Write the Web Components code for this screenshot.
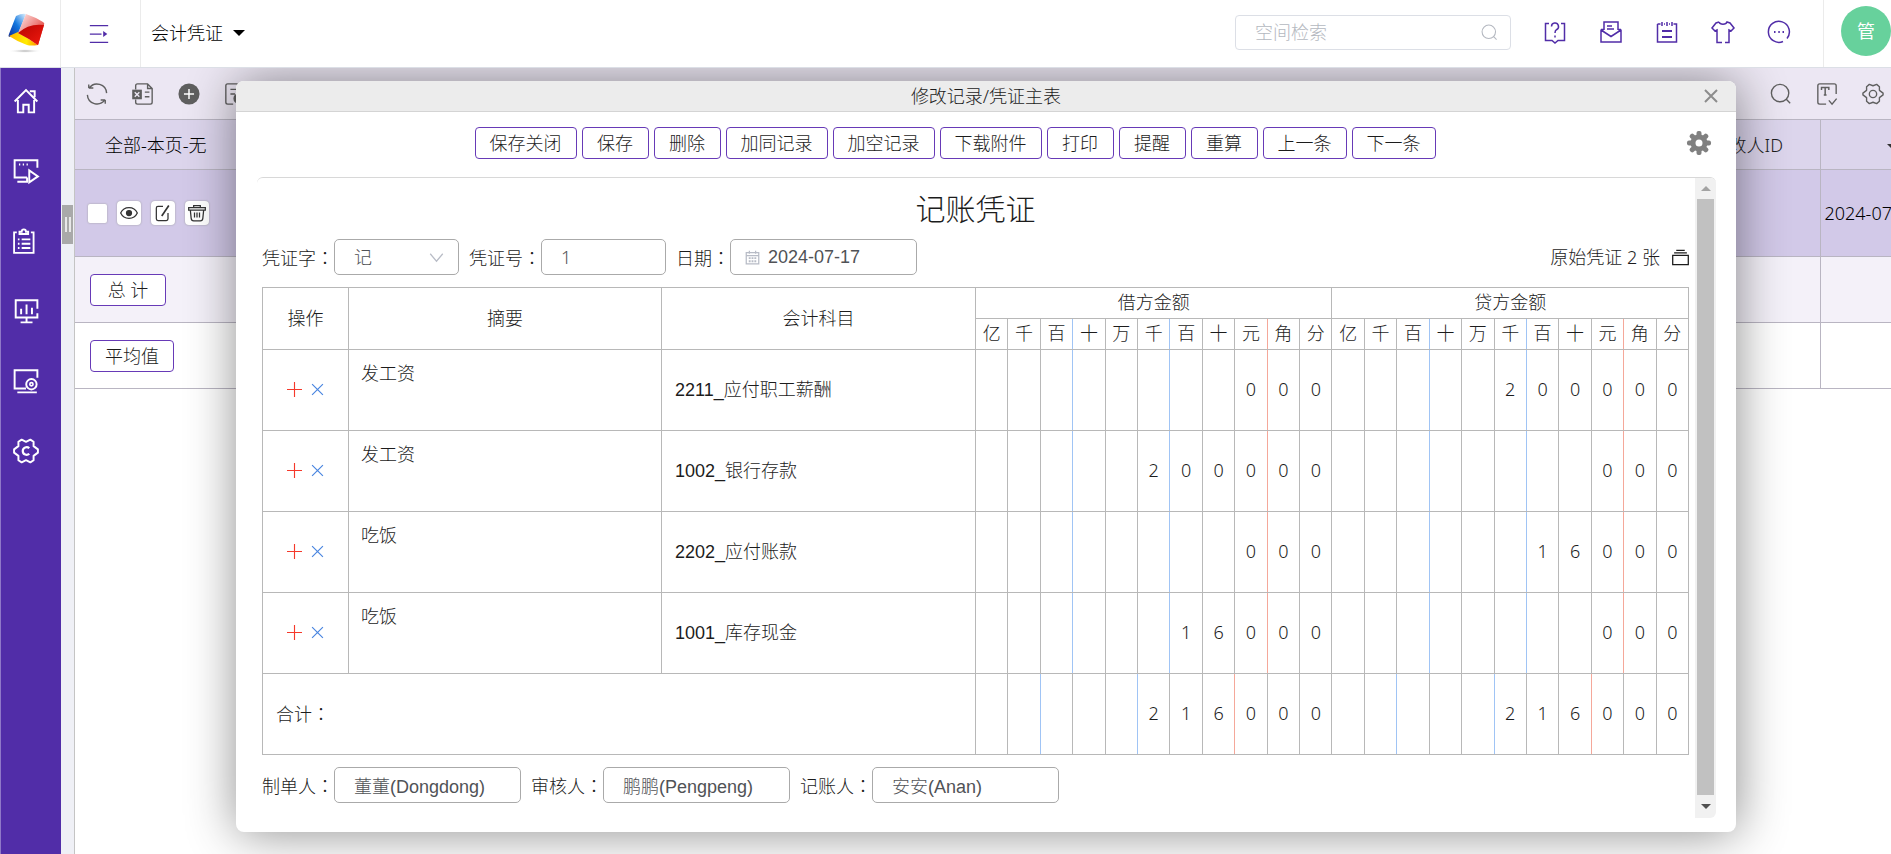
<!DOCTYPE html>
<html lang="zh-CN">
<head>
<meta charset="utf-8">
<meta name="viewport" content="width=device-width, initial-scale=1">
<title>会计凭证</title>
<style>
  body {
    margin: 0;
    font: 300 18px/24px "Noto Sans", "Noto Sans CJK SC", sans-serif;
    color: #1c1c1c;
    --brand: #512da8;
    --line: #b8b8b8;
  }
</style>
</head>
<body>
<voucher-app></voucher-app>

<script>
// ============ ICONS ============

// 24x24 grid, stroked with currentColor
const ICONS = {
  menu: '<path d="M1 2h22M1 12h14M1 22h22"/><path d="M17 8.5v7l5-3.5z" fill="currentColor" stroke="none"/>',
  search: '<circle cx="11" cy="11" r="9.500"/><path d="M17.5 17.5L22 22"/>',
  help: '<path d="M6 3.500H2.500v17H9l3 2.500 3-2.500h6.500v-17H18"/><path d="M8.500 6.500a3.500 3.500 0 1 1 5 3.200c-1.200.7-1.500 1.300-1.500 3.300M12 15.500v2"/>',
  mail: '<path d="M5 10V2h14v8M2 9.500h3M19 9.500h3M2 9.500V22h20V9.500M2 10l10 6.500L22 10M8 6h5M8 9h7"/>',
  notes: '<path d="M2.500 4v18h19V4h-3M5.500 4h-3M7 2v4M12 2v4M17 2v4M9 4h1M14 4h1"/><path d="M7 11h10M7 17h10" stroke-width="2"/>',
  shirt: '<path d="M8 2c1 3 7 3 8 0l3 1 4 5-3 3-2-1v12.500h-4M11 22.500H6V10l-2 1-3-3 4-5 3-1"/>',
  more: '<path d="M20 18.500a10.500 10.500 0 1 0-4 3"/><path d="M7 12h1.500M11.300 12h1.500M15.500 12H17" stroke-width="2"/>',
  home: '<path d="M1.500 12.500L12 2l10.500 10.500M4.500 11v11.500h5v-7h5v7h5V11M15.500 3h4.500v5.500" stroke-width="1.800"/>',
  screen: '<path d="M22.500 9V2h-21v16H13M4 22h9v-4M5.500 6h1.200M9 6h1.200M12.500 6h1.200" stroke-width="1.800"/><path d="M15 11.500v11l8-5.500z" stroke-width="1.800"/>',
  clip: '<path d="M3.500 4H1v19h18V4h-2.500M6 5.500h8V3.500h-2c0-3-4-3-4 0H6zM8 10.500h8M8 14.500h8M8 18.500h8M4.500 10.500H6M4.500 14.500H6M4.500 18.500H6" stroke-width="1.700"/>',
  chart: '<path d="M22.500 10V2h-20v16h20v-4M12.500 18v4.500M7 22.500h11M7.500 10v5M12.500 6v9M17.500 9v6" stroke-width="1.800"/>',
  monitor: '<path d="M22.500 9V2h-21v17H12M4 22.500h18" stroke-width="1.800"/><circle cx="17" cy="15" r="4.800" stroke-width="1.800"/><circle cx="17" cy="15" r="1.500"/>',
  cog: '<path d="M8 1.500l4 2 4-2 3 2v4l4 3v3l-4 3v4l-3 2-4-2-4 2-3-2v-4l-4-3v-3l4-3v-4z" stroke-width="1.800" stroke-linejoin="round"/><path d="M15 9.500c-2-2-6-1-6 2.500s4 4.500 6 2.500" stroke-width="2"/>',
  refresh: '<path d="M3 5.500v-4M3 5.500h5M3.500 5.500a10.500 10.500 0 0 1 19 5.500M21 18.500v4M21 18.500h-5M20.500 18.500a10.500 10.500 0 0 1-19-5.500"/>',
  excel: '<path d="M4 7V3q0-2 2-2h11l5 5v15q0 2-2 2H6q-2 0-2-2v-3M17 1v5h5M14 10h5M14 15h5"/><rect x="1" y="8" width="9" height="9" fill="currentColor"/><path d="M3 10l5 5M8 10l-5 5" stroke="#ece7f3"/>',
  plus: '<circle cx="12" cy="12" r="11.500" fill="currentColor" stroke="none"/><path d="M12 6.500v11M6.500 12h11" stroke="#fff" stroke-width="1.600"/>',
  docadd: '<path d="M21 9V3q0-2-2-2H4Q2 1 2 3v18q0 2 2 2h6M7 7h10M7 12h5"/><circle cx="16" cy="17" r="5" fill="currentColor"/>',
  textcheck: '<path d="M22 12V3q0-2-2-2H4Q2 1 2 3v18q0 2 2 2h7M14 19l3.500 4 5-6"/><path d="M6 7.500V5h8v2.500M10 5v8M8.500 13h3" stroke-width="1.600"/>',
  gear: '<path d="M8 1.500l4 1.500 4-1.500 3 2.500v4l4 3v2l-4 3v4l-3 2.500-4-1.500-4 1.500-3-2.500v-4l-4-3v-2l4-3V4z" stroke-linejoin="round"/><circle cx="12" cy="12" r="4"/>',
  eye: '<path d="M2 12c4-8.500 16-8.500 20 0-4 8.500-16 8.500-20 0z"/><circle cx="12" cy="12" r="3" fill="currentColor"/>',
  edit: '<path d="M12 4H6Q4 4 4 6v13q0 2 2 2h10q2 0 2-2v-7"/><path d="M10.500 15.500L19 3" stroke-width="2"/>',
  trash: '<path d="M2 5.500h20v3H2zM8 5.500V3h8v2.500M4 8.500l1 10q.3 3 3 3h8q2.700 0 3-3l1-10M9 11.500v6M12 11.500v6M15 11.500v6"/>',
  close: '<path d="M3 3l18 18M21 3L3 21" stroke-width="3"/>',
  cross: '<path d="M2 2l20 20M22 2L2 22" stroke-width="2.200"/>',
  add: '<path d="M12 0v24M0 12h24" stroke-width="1.800"/>',
  chevron: '<path d="M2 6l10 12L22 6" stroke-width="2"/>',
  calendar: '<path d="M2 4h20v18H2zM2 9h20M7 1v5M17 1v5" stroke-width="2"/><path d="M6 13h12M6 18h12" stroke-width="3" stroke-dasharray="3 1.500"/>',
  stack: '<path d="M1 9h22v13H1z" stroke-width="1.800"/><path d="M3 5.500h18M6 2h12" stroke-width="1.600"/>',
};

// Solid gear with eight teeth
ICONS.gearSolid = '<path fill-rule="evenodd" fill="currentColor" stroke="none" d="M12 3.500a8.500 8.500 0 1 0 0 17 8.500 8.500 0 0 0 0-17zm0 5a3.500 3.500 0 1 1 0 7 3.500 3.500 0 0 1 0-7z"/>' +
  [0, 45, 90, 135, 180, 225, 270, 315]
    .map(a => `<rect x="9.500" y="0" width="5" height="6" rx="2" fill="currentColor" stroke="none" transform="rotate(${a} 12 12)"/>`)
    .join('');

class UiIcon extends HTMLElement {
  constructor() {
    super();
    this.attachShadow({ mode: 'open' });
  }

  connectedCallback() {
    this.shadowRoot.innerHTML = `
      <style>
        :host { display: inline-flex; flex: none; width: 22px; height: 22px; }
        svg { width: 100%; height: 100%; overflow: visible; }
      </style>
      <svg viewBox="0 0 24 24" fill="none" stroke="currentColor" stroke-width="1.500" aria-hidden="true">${ICONS[this.getAttribute('name')]}</svg>
    `;
  }
}
customElements.define('ui-icon', UiIcon);

// ============ BUTTON ============

class UiButton extends HTMLElement {
  constructor() {
    super();
    this.attachShadow({ mode: 'open' }).innerHTML = `
      <style>
        :host { display: inline-flex; }
        button {
          box-sizing: border-box;
          height: 32px;
          padding: 0 14px;
          min-width: var(--button-min, 67px);
          background: #fff;
          border: 1px solid #673ab7;
          border-radius: 4px;
          font: inherit;
          color: #1c1c1c;
          white-space: nowrap;
          cursor: pointer;
        }
        button:hover { background: #f4f1f9; }
      </style>
      <button type="button"><slot></slot></button>
    `;
  }
}
customElements.define('ui-button', UiButton);

// ============ FORM FIELD ============

/**
 * @attr {string} label
 * @attr {string} type - text | select | date
 * @attr {string} value
 */
class UiField extends HTMLElement {
  constructor() {
    super();
    this.attachShadow({ mode: 'open' });
  }

  connectedCallback() {
    const type = this.getAttribute('type') || 'text';
    const value = this.getAttribute('value') || '';
    const control = type === 'select'
      ? `<select id="control"><option>${value}</option><option>收</option><option>付</option><option>转</option></select>`
      : `<input id="control" type="text" value="${value}">`;

    this.shadowRoot.innerHTML = `
      <style>
        :host { display: flex; align-items: center; }
        label { white-space: nowrap; }
        .colon { font-family: "Noto Sans CJK TC", sans-serif; }
        .box {
          box-sizing: border-box;
          display: flex;
          align-items: center;
          width: var(--field-width, 125px);
          height: 36px;
          border: 1px solid #aaa;
          border-radius: 5px;
          background: #fff;
        }
        .box.date { padding-left: 14px; }
        .box.select { padding-right: 14px; }
        input, select {
          flex: 1;
          min-width: 0;
          height: 32px;
          padding: 0 0 0 19px;
          border: 0;
          outline: 0;
          background: none;
          appearance: none;
          font-size: 18px;
          font-weight: inherit;
          font-family: var(--field-font, "Noto Sans", "Noto Sans CJK SC", sans-serif);
          color: #505256;
        }
        .date input { padding-left: 8px; }
        ui-icon { width: 15px; height: 15px; color: #b8bcc6; }
      </style>
      <label for="control">${this.getAttribute('label')}<span class="colon" lang="zh-TW">：</span></label>
      <div class="box ${type}">
        ${type === 'date' ? '<ui-icon name="calendar"></ui-icon>' : ''}
        ${control}
        ${type === 'select' ? '<ui-icon name="chevron"></ui-icon>' : ''}
      </div>
    `;
  }
}
customElements.define('ui-field', UiField);

// ============ TOP BAR ============

class AppHeader extends HTMLElement {
  constructor() {
    super();
    this.attachShadow({ mode: 'open' }).innerHTML = `
      <style>
        :host {
          box-sizing: border-box;
          display: flex;
          align-items: stretch;
          height: 68px;
          background: #fff;
          border-bottom: 1px solid #dcdfe6;
          color: var(--brand);
        }
        button {
          display: flex;
          align-items: center;
          justify-content: center;
          padding: 0;
          border: 0;
          background: none;
          font: inherit;
          color: inherit;
          cursor: pointer;
        }
        .logo { width: 60px; border-right: 1px solid #ebebeb; }
        .toggle {
          width: 80px;
          padding-right: 4px;
          border-right: 1px solid #ebebeb;
        }
        .toggle ui-icon { width: 20px; height: 20px; }
        .title {
          gap: 10px;
          padding: 0 10px 2px;
          color: #000;
        }
        .caret {
          border: 6px solid transparent;
          border-top-color: #000;
          border-bottom: 0;
        }
        .right {
          display: flex;
          align-items: center;
          gap: 32px;
          margin-left: auto;
        }
        .right > button, .search { margin-bottom: 3px; }
        .search {
          box-sizing: border-box;
          display: flex;
          align-items: center;
          width: 276px;
          height: 35px;
          padding: 0 12px 0 19px;
          border: 1px solid #dcdfe6;
          border-radius: 4px;
          color: #b4b8c0;
        }
        .search input {
          flex: 1;
          min-width: 0;
          padding: 0;
          border: 0;
          outline: 0;
          background: none;
          font: inherit;
          color: #606266;
        }
        .search input::placeholder { color: #b4b8c0; }
        .search ui-icon { width: 17px; height: 17px; }
        .right button ui-icon { width: 24px; height: 24px; }
        .user {
          display: flex;
          align-items: center;
          align-self: stretch;
          box-sizing: border-box;
          padding: 0 0 5px 17px;
          border-left: 1px solid #ebebeb;
        }
        .avatar {
          width: 50px;
          height: 50px;
          border-radius: 50%;
          background: #67d19c;
          color: #fff;
          font-weight: 400;
        }
      </style>
      <div class="logo">
        <svg width="60" height="67" viewBox="0 0 60 67" role="img" aria-label="logo">
          <defs>
            <linearGradient id="blue" x1="0" y1="1" x2="1" y2="0"><stop offset="0" stop-color="#0b2c9c"/><stop offset=".5" stop-color="#1277df"/><stop offset="1" stop-color="#e3f4ff"/></linearGradient>
            <linearGradient id="red" x1="0" y1="0" x2="1" y2="1"><stop offset="0" stop-color="#fff0f0"/><stop offset=".6" stop-color="#ea6a64"/><stop offset="1" stop-color="#c30000"/></linearGradient>
            <linearGradient id="deep" x1="0" y1="0" x2="1" y2="1"><stop offset="0" stop-color="#b80400"/><stop offset="1" stop-color="#f01a10"/></linearGradient>
            <linearGradient id="yellow"><stop offset="0" stop-color="#ffb400"/><stop offset=".6" stop-color="#ffec00"/><stop offset="1" stop-color="#ff8a00"/></linearGradient>
            <radialGradient id="shade"><stop offset="0" stop-color="#aaa"/><stop offset="1" stop-color="#fff" stop-opacity="0"/></radialGradient>
          </defs>
          <ellipse cx="25" cy="51" rx="17" ry="2" fill="url(#shade)"/>
          <path d="M16 16q6-3 10-2L18 34 9 37q-1-1 0-3z" fill="url(#blue)"/>
          <path d="M9 36l9-4 20 13q-7 1-11 0-9-3-18-9z" fill="url(#yellow)"/>
          <path d="M26 14q9 3 17 8 2 1 1 3l-6 20q-10-7-20-12z" fill="url(#red)"/>
          <path d="M18 33q11-10 26-8l-6 20q-10-7-20-12z" fill="url(#deep)"/>
        </svg>
      </div>
      <button class="toggle" aria-label="菜单"><ui-icon name="menu"></ui-icon></button>
      <button class="title">会计凭证<span class="caret"></span></button>
      <div class="right">
        <div class="search">
          <input type="text" placeholder="空间检索" aria-label="空间检索">
          <ui-icon name="search"></ui-icon>
        </div>
        <button aria-label="帮助"><ui-icon name="help"></ui-icon></button>
        <button aria-label="邮件"><ui-icon name="mail"></ui-icon></button>
        <button aria-label="便签"><ui-icon name="notes"></ui-icon></button>
        <button aria-label="换肤"><ui-icon name="shirt"></ui-icon></button>
        <button aria-label="更多"><ui-icon name="more"></ui-icon></button>
        <div class="user"><button class="avatar">管</button></div>
      </div>
    `;
  }
}
customElements.define('app-header', AppHeader);

// ============ SIDE BAR ============

class AppSidebar extends HTMLElement {
  constructor() {
    super();
    this.attachShadow({ mode: 'open' }).innerHTML = `
      <style>
        :host { display: flex; }
        nav {
          box-sizing: border-box;
          display: flex;
          flex-direction: column;
          gap: 44px;
          width: 61px;
          padding: 20px 12px;
          background: var(--brand);
          border-left: 1px solid #8f78c8;
        }
        a { display: flex; color: #fff; }
        a ui-icon { width: 26px; height: 26px; }
        .gutter {
          width: 13px;
          padding: 137px 1px 0;
          box-sizing: border-box;
          background: #eff0f6;
        }
        .handle {
          display: flex;
          align-items: center;
          justify-content: center;
          gap: 2px;
          height: 39px;
          background: #a9a9a9;
        }
        .handle i { width: 2px; height: 15px; background: #e8e8e8; }
      </style>
      <nav>
        ${['home', 'screen', 'clip', 'chart', 'monitor', 'cog'].map(n => `<a href="#${n}" aria-label="${n}"><ui-icon name="${n}"></ui-icon></a>`).join('')}
      </nav>
      <div class="gutter"><div class="handle"><i></i><i></i></div></div>
    `;
  }
}
customElements.define('app-sidebar', AppSidebar);

// ============ RECORD LIST ============

class RecordList extends HTMLElement {
  constructor() {
    super();
    this.attachShadow({ mode: 'open' }).innerHTML = `
      <style>
        :host {
          display: block;
          border-left: 1px solid #c4c4c4;
          overflow: hidden;
        }
        .tools {
          display: flex;
          align-items: center;
          gap: 24px;
          height: 51px;
          padding: 0 7px 0 11px;
          background: #ece7f3;
          color: #5f5f5f;
        }
        .tools button, .ops button {
          display: flex;
          padding: 0;
          border: 0;
          background: none;
          color: inherit;
          cursor: pointer;
        }
        .tools .find { margin-left: auto; }
        table {
          width: calc(100% + 75px);
          table-layout: fixed;
          border-collapse: collapse;
        }
        th, td {
          box-sizing: border-box;
          padding: 0;
          border-top: 1px solid #b9b5c2;
          border-bottom: 1px solid #b9b5c2;
          font-weight: inherit;
          text-align: left;
          white-space: nowrap;
        }
        th:last-child, td:last-child { border-left: 1px solid #b9b5c2; padding-left: 4px; }
        tr { height: 66px; background: #fff; }
        tr.head { height: 50px; background: #dcd5ec; }
        tr.record { height: 87px; background: #d2c9e8; color: #000; }
        tr.sum { background: #f4f1f9; }
        .head th:first-child { padding-left: 30px; color: #000; }
        .head th:nth-child(3), .head th:last-child { text-align: center; padding: 0; }
        .caret {
          display: inline-block;
          border: 6px solid transparent;
          border-top-color: #333;
          border-bottom: 0;
          vertical-align: middle;
        }
        .ops {
          display: flex;
          align-items: center;
          gap: 10px;
          padding-left: 13px;
        }
        .ops input {
          appearance: none;
          width: 19px;
          height: 19px;
          margin: 0;
          background: #fff;
          border-radius: 2px;
          box-shadow: 0 0 2px #999;
        }
        .ops button {
          width: 24px;
          height: 24px;
          align-items: center;
          justify-content: center;
          background: #fff;
          border-radius: 4px;
          box-shadow: 0 0 2px #999;
          color: #333;
        }
        .ops ui-icon { width: 20px; height: 20px; }
        .stat { padding-left: 15px; }
        .stat ui-button { --button-min: 76px; vertical-align: middle; }
      </style>
      <div class="tools">
        <button aria-label="刷新"><ui-icon name="refresh"></ui-icon></button>
        <button aria-label="导出"><ui-icon name="excel"></ui-icon></button>
        <button aria-label="新增"><ui-icon name="plus"></ui-icon></button>
        <button aria-label="批量新增"><ui-icon name="docadd"></ui-icon></button>
        <button class="find" aria-label="查找"><ui-icon name="search"></ui-icon></button>
        <button aria-label="字段"><ui-icon name="textcheck"></ui-icon></button>
        <button aria-label="设置"><ui-icon name="gear"></ui-icon></button>
      </div>
      <table>
        <colgroup><col style="width:250px"><col><col style="width:146px"><col style="width:146px"></colgroup>
        <tr class="head"><th>全部-本页-无</th><th></th><th>修改人ID</th><th><span class="caret"></span></th></tr>
        <tr class="record">
          <td><div class="ops">
            <input type="checkbox" aria-label="选择">
            <button aria-label="查看"><ui-icon name="eye"></ui-icon></button>
            <button aria-label="编辑"><ui-icon name="edit"></ui-icon></button>
            <button aria-label="删除"><ui-icon name="trash"></ui-icon></button>
          </div></td>
          <td></td><td></td><td>2024-07</td>
        </tr>
        <tr class="sum"><td class="stat"><ui-button>总 计</ui-button></td><td></td><td></td><td></td></tr>
        <tr><td class="stat"><ui-button>平均值</ui-button></td><td></td><td></td><td></td></tr>
      </table>
    `;
  }
}
customElements.define('record-list', RecordList);

// ============ VOUCHER TABLE ============

const UNITS = ['亿', '千', '百', '十', '万', '千', '百', '十', '元', '角', '分'];

const ENTRIES = [
  { memo: '发工资', subject: '2211_应付职工薪酬', debit: '000', credit: '200000' },
  { memo: '发工资', subject: '1002_银行存款', debit: '200000', credit: '000' },
  { memo: '吃饭', subject: '2202_应付账款', debit: '000', credit: '16000' },
  { memo: '吃饭', subject: '1001_库存现金', debit: '16000', credit: '000' },
];

const TOTAL = { debit: '216000', credit: '216000' };

class VoucherTable extends HTMLElement {
  constructor() {
    super();
    this.attachShadow({ mode: 'open' });
  }

  connectedCallback() {
    this.shadowRoot.innerHTML = `
      <style>
        :host { display: block; }
        table {
          width: 100%;
          table-layout: fixed;
          border-collapse: collapse;
        }
        th, td {
          padding: 0 0 2px;
          border: 1px solid var(--line);
          font-weight: inherit;
          text-align: center;
        }
        thead tr { height: 31px; }
        tbody tr, tfoot tr { height: 81px; }
        .blue { border-right-color: #a0c4f5; }
        .red { border-right-color: #f5a89a; }
        .memo {
          padding: 11px 12px 0;
          text-align: left;
          vertical-align: top;
        }
        .subject {
          padding: 0 0 0 13px;
          text-align: left;
          font-family: "Liberation Sans", "Noto Sans CJK SC", sans-serif;
        }
        .total { padding-left: 13px; text-align: left; }
        .colon { font-family: "Noto Sans CJK TC", sans-serif; }
        .ops { display: flex; align-items: center; justify-content: center; gap: 9px; }
        .ops button {
          display: flex;
          padding: 0;
          border: 0;
          background: none;
          color: #f5392b;
          cursor: pointer;
        }
        .ops button + button { color: #4a86e0; }
        .ops ui-icon { width: 15px; height: 15px; }
        .ops button + button ui-icon { width: 13px; height: 13px; }
      </style>
      <table>
        <colgroup><col style="width:86px"><col style="width:313px"><col style="width:314px"><col span="22"></colgroup>
        <thead>
          <tr>
            <th rowspan="2">操作</th><th rowspan="2">摘要</th><th rowspan="2">会计科目</th>
            <th colspan="11">借方金额</th><th colspan="11">贷方金额</th>
          </tr>
          <tr>${this._cells(UNITS, 'th', 0)}${this._cells(UNITS, 'th', 0)}</tr>
        </thead>
        <tbody>${ENTRIES.map(e => this._row(e)).join('')}</tbody>
        <tfoot>
          <tr><td class="total" colspan="3">合计<span class="colon" lang="zh-TW">：</span></td>${this._amount(TOTAL.debit, 1)}${this._amount(TOTAL.credit, 1)}</tr>
        </tfoot>
      </table>
    `;
  }

  // shift moves the coloured separators one column left (total row)
  _cells(values, tag, shift) {
    return values.map((v, i) => {
      const n = i + 1 + shift;
      const cls = n === 3 || n === 6 ? 'blue' : n === 9 ? 'red' : '';
      return `<${tag} class="${cls}">${v}</${tag}>`;
    }).join('');
  }

  _amount(text, shift = 0) {
    return this._cells([...text.padStart(UNITS.length)].map(c => c.trim()), 'td', shift);
  }

  _row({ memo, subject, debit, credit }) {
    return `
      <tr>
        <td><div class="ops">
          <button aria-label="插入"><ui-icon name="add"></ui-icon></button>
          <button aria-label="移除"><ui-icon name="cross"></ui-icon></button>
        </div></td>
        <td class="memo">${memo}</td>
        <td class="subject">${subject}</td>
        ${this._amount(debit)}${this._amount(credit)}
      </tr>
    `;
  }
}
customElements.define('voucher-table', VoucherTable);

// ============ DIALOG ============

class VoucherDialog extends HTMLElement {
  constructor() {
    super();
    this.attachShadow({ mode: 'open' }).innerHTML = `
      <style>
        :host {
          display: flex;
          flex-direction: column;
          background: #fff;
          border-radius: 8px;
          box-shadow: 1px 1px 50px rgba(0, 0, 0, .45);
          overflow: hidden;
        }
        header {
          box-sizing: border-box;
          display: flex;
          align-items: center;
          height: 31px;
          padding: 0 17px;
          background: #ececec;
          border-bottom: 1px solid #d4d4d4;
        }
        h2 {
          flex: 1;
          margin: 0;
          padding-left: 16px;
          font: inherit;
          text-align: center;
        }
        .icon {
          display: flex;
          padding: 0;
          border: 0;
          background: none;
          color: #8c8c8c;
          cursor: pointer;
        }
        header ui-icon { width: 16px; height: 16px; }
        .bar {
          display: flex;
          align-items: center;
          padding: 15px 25px 18px 0;
        }
        .actions {
          flex: 1;
          display: flex;
          justify-content: center;
          gap: 5px;
          padding-right: 13px;
        }
        .bar .icon ui-icon { width: 24px; height: 24px; color: #808080; }
        .pane {
          flex: 1;
          min-height: 0;
          display: flex;
          margin: 0 20px 14px 21px;
          border-top: 1px solid #d8d8d8;
          border-radius: 6px;
          overflow: hidden;
        }
        .content { flex: 1; min-width: 0; padding: 0 6px 0 5px; }
        .scroll {
          display: flex;
          flex-direction: column;
          width: 21px;
          background: #f1f1f1;
        }
        .scroll span {
          display: flex;
          align-items: center;
          justify-content: center;
          height: 21px;
        }
        .scroll span::after {
          content: "";
          border: 5px solid transparent;
          border-top: 0;
          border-bottom-color: #a3a3a3;
        }
        .scroll span:last-child { height: 23px; }
        .scroll span:last-child::after {
          border-top: 5px solid #505050;
          border-bottom: 0;
        }
        .scroll div { flex: 1; margin: 0 2px; background: #c1c1c1; }
      </style>
      <header>
        <h2><slot name="title"></slot></h2>
        <button class="icon" aria-label="关闭"><ui-icon name="close"></ui-icon></button>
      </header>
      <div class="bar">
        <div class="actions"><slot name="actions"></slot></div>
        <button class="icon" aria-label="设置"><ui-icon name="gearSolid"></ui-icon></button>
      </div>
      <div class="pane">
        <div class="content"><slot></slot></div>
        <div class="scroll"><span></span><div></div><span></span></div>
      </div>
    `;
  }
}
customElements.define('voucher-dialog', VoucherDialog);

class VoucherForm extends HTMLElement {
  constructor() {
    super();
    this.attachShadow({ mode: 'open' }).innerHTML = `
      <style>
        :host { display: block; }
        h1 {
          margin: 0;
          font-size: 30px;
          font-weight: inherit;
          line-height: 61px;
          text-align: center;
        }
        .row { display: flex; align-items: center; gap: 10px; }
        .wide { --field-width: 187px; --field-font: "Liberation Sans", "Noto Sans CJK SC", sans-serif; }
        .attach {
          display: flex;
          align-items: center;
          gap: 12px;
          margin-left: auto;
        }
        .attach ui-icon { width: 17px; height: 17px; }
        voucher-table { margin: 12px 0; }
      </style>
      <h1>记账凭证</h1>
      <div class="row">
        <ui-field label="凭证字" type="select" value="记"></ui-field>
        <ui-field label="凭证号" value="1"></ui-field>
        <ui-field class="wide" label="日期" type="date" value="2024-07-17"></ui-field>
        <div class="attach">原始凭证 2 张<ui-icon name="stack"></ui-icon></div>
      </div>
      <voucher-table></voucher-table>
      <div class="row">
        <ui-field class="wide" label="制单人" value="董董(Dongdong)"></ui-field>
        <ui-field class="wide" label="审核人" value="鹏鹏(Pengpeng)"></ui-field>
        <ui-field class="wide" label="记账人" value="安安(Anan)"></ui-field>
      </div>
    `;
  }
}
customElements.define('voucher-form', VoucherForm);

// ============ APP ============

const ACTIONS = ['保存关闭', '保存', '删除', '加同记录', '加空记录', '下载附件', '打印', '提醒', '重算', '上一条', '下一条'];

class VoucherApp extends HTMLElement {
  constructor() {
    super();
    this.attachShadow({ mode: 'open' }).innerHTML = `
      <style>
        :host {
          display: flex;
          flex-direction: column;
          height: 100vh;
          overflow: hidden;
        }
        .body { flex: 1; min-height: 0; display: flex; }
        main {
          position: relative;
          flex: 1;
          min-width: 0;
          overflow: hidden;
          background: #fff;
        }
        record-list { height: 100%; }
        voucher-dialog { position: absolute; inset: 13px 155px 22px 162px; }
      </style>
      <app-header></app-header>
      <div class="body">
        <app-sidebar></app-sidebar>
        <main>
          <record-list></record-list>
          <voucher-dialog>
            <span slot="title">修改记录/凭证主表</span>
            ${ACTIONS.map(a => `<ui-button slot="actions">${a}</ui-button>`).join('')}
            <voucher-form></voucher-form>
          </voucher-dialog>
        </main>
      </div>
    `;
  }
}
customElements.define('voucher-app', VoucherApp);
</script>
</body>
</html>
